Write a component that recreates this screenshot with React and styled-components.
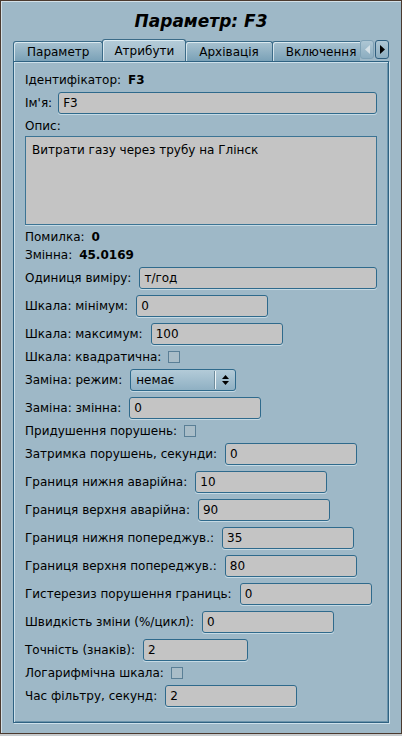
import React from 'react';
import styled, { createGlobalStyle } from 'styled-components';

const Global = createGlobalStyle`
  html, body { margin: 0; padding: 0; background: #c6cacc; }
  body { font-family: "DejaVu Sans", "Noto Sans", sans-serif; color: #000; }
  #root { width: 402px; height: 736px; }
`;

const Window = styled.div`
  box-sizing: border-box;
  width: 402px;
  height: 734px;
  background: #9eb8c7;
  border: 1px solid #4b3a2f;
  box-shadow: inset 1px 1px 0 #d3e0e7;
  display: flex;
  flex-direction: column;
  padding: 0 12px 10px 12px;
`;

const Title = styled.div`
  height: 38px;
  box-sizing: border-box;
  padding-top: 8px;
  font-size: 17px;
  line-height: 24px;
  font-weight: bold;
  font-style: italic;
  text-align: center;
`;

const TabBar = styled.div`
  display: flex;
  align-items: flex-end;
  height: 22px;
`;

const TabStrip = styled.div`
  flex: 1;
  display: flex;
  align-items: flex-end;
  overflow: hidden;
  height: 22px;
`;

const Tab = styled.div`
  flex: none;
  box-sizing: border-box;
  height: ${(p) => (p.$active ? 22 : 20)}px;
  padding: 0 ${(p) => (p.$active ? 11 : 13)}px;
  font-size: 12px;
  display: flex;
  align-items: center;
  border: 1px solid #3b6b88;
  border-bottom: none;
  border-radius: 3px 3px 0 0;
  background: ${(p) =>
    p.$active
      ? 'linear-gradient(#b4ccd9, #9eb8c7)'
      : 'linear-gradient(#a8c2d0, #7aa1b7)'};
  box-shadow: inset 1px 1px 0 rgba(235, 245, 250, 0.75);
  margin-left: ${(p) => (p.$first ? 0 : -1)}px;
`;

const ScrollButtons = styled.div`
  flex: none;
  display: flex;
  gap: 1px;
  padding-bottom: 2px;
`;

const ScrollBtn = styled.div`
  box-sizing: border-box;
  width: 14px;
  height: 19px;
  border: 1px solid ${(p) => (p.$disabled ? '#7ea1b5' : '#2f5f7f')};
  border-radius: 3px;
  background: linear-gradient(#aec7d4, #8cadc0);
  display: flex;
  align-items: center;
  justify-content: center;
`;

const Panel = styled.div`
  flex: 1;
  box-sizing: border-box;
  border: 1px solid #2f6282;
  box-shadow: inset 1px 1px 0 #cde0ea, inset -1px -1px 0 #6a93ab, 1px 1px 0 #cde0ea;
  padding: 9px 11px 0 11px;
  display: flex;
  flex-direction: column;
  font-size: 12px;
`;

const InfoRow = styled.div`
  height: 18px;
  display: flex;
  align-items: center;
  gap: 7px;
  white-space: nowrap;
`;

const Value = styled.span`
  font-weight: bold;
`;

const FieldRow = styled.div`
  height: 28px;
  display: flex;
  align-items: center;
  gap: ${(p) => (p.$gap ? p.$gap : 8)}px;
  white-space: nowrap;
`;

const CheckRow = styled.div`
  height: 18px;
  display: flex;
  align-items: center;
  gap: 7px;
  white-space: nowrap;
`;

const Label = styled.span`
  flex: none;
`;

const Field = styled.input`
  box-sizing: border-box;
  height: 22px;
  width: ${(p) => (p.$w ? `${p.$w}px` : 'auto')};
  flex: ${(p) => (p.$w ? 'none' : '1')};
  min-width: 0;
  margin: 0;
  background: #c4c4c4;
  border: 1px solid #2f6a8c;
  border-radius: 3px;
  box-shadow: 0 1px 0 #c6dae4;
  padding: 0 4px;
  font-family: "DejaVu Sans", sans-serif;
  font-size: 12px;
  color: #000;
  outline: none;
`;

const Memo = styled.textarea`
  box-sizing: border-box;
  width: 100%;
  height: 89px;
  margin: 1px 0 3px 0;
  resize: none;
  background: #c4c4c4;
  border: 1px solid #3c7494;
  border-radius: 0;
  box-shadow: 0 1px 0 #c6dae4;
  padding: 5px 6px;
  font-family: "DejaVu Sans", sans-serif;
  font-size: 12px;
  line-height: 16px;
  color: #000;
  outline: none;
`;

const Select = styled.div`
  box-sizing: border-box;
  width: 106px;
  height: 22px;
  border: 1px solid #2f6a8c;
  border-radius: 3px;
  background: linear-gradient(#b3cbd8, #8fb0c3);
  box-shadow: 0 1px 0 #c6dae4;
  display: flex;
  align-items: center;
`;

const SelectText = styled.span`
  flex: 1;
  padding-left: 5px;
`;

const SelectArrow = styled.span`
  width: 19px;
  height: 18px;
  border-left: 1px solid #eef5f8;
  box-shadow: -1px 0 0 #6f8c9c;
  display: flex;
  align-items: center;
  justify-content: center;
`;

const Check = styled.span`
  box-sizing: border-box;
  flex: none;
  width: 12px;
  height: 12px;
  border: 1px solid #5a7f96;
  background: #a9bdc8;
`;

const fields = [
  { type: 'field', label: 'Затримка порушень, секунди:', value: '0', w: 132 },
  { type: 'field', label: 'Границя нижня аварійна:', value: '10', w: 132 },
  { type: 'field', label: 'Границя верхня аварійна:', value: '90', w: 132 },
  { type: 'field', label: 'Границя нижня попереджув.:', value: '35', w: 132 },
  { type: 'field', label: 'Границя верхня попереджув.:', value: '80', w: 132 },
  { type: 'field', label: 'Гистерезиз порушення границь:', value: '0', w: 132 },
  { type: 'field', label: 'Швидкість зміни (%/цикл):', value: '0', w: 132 },
  { type: 'field', label: 'Точність (знаків):', value: '2', w: 105 },
  { type: 'check', label: 'Логарифмічна шкала:' },
  { type: 'field', label: 'Час фільтру, секунд:', value: '2', w: 132 },
];

export default function App() {
  return (
    <>
      <Global />
      <Window>
        <Title>Параметр: F3</Title>
        <TabBar>
          <TabStrip>
            <Tab $first>Параметр</Tab>
            <Tab $active>Атрибути</Tab>
            <Tab>Архівація</Tab>
            <Tab>Включення</Tab>
          </TabStrip>
          <ScrollButtons>
            <ScrollBtn $disabled>
              <svg width="5" height="9" viewBox="0 0 5 9">
                <polygon points="5,0 0,4.5 5,9" fill="#d4e0e6" />
              </svg>
            </ScrollBtn>
            <ScrollBtn>
              <svg width="5" height="9" viewBox="0 0 5 9">
                <polygon points="0,0 5,4.5 0,9" fill="#000" />
              </svg>
            </ScrollBtn>
          </ScrollButtons>
        </TabBar>
        <Panel>
          <InfoRow>
            <Label>Ідентифікатор:</Label>
            <Value>F3</Value>
          </InfoRow>
          <FieldRow $gap={6}>
            <Label>Ім'я:</Label>
            <Field readOnly defaultValue="F3" />
          </FieldRow>
          <InfoRow>
            <Label>Опис:</Label>
          </InfoRow>
          <Memo readOnly defaultValue="Витрати газу через трубу на Глінск" />
          <InfoRow>
            <Label>Помилка:</Label>
            <Value>0</Value>
          </InfoRow>
          <InfoRow>
            <Label>Змінна:</Label>
            <Value>45.0169</Value>
          </InfoRow>
          <FieldRow>
            <Label>Одиниця виміру:</Label>
            <Field readOnly defaultValue="т/год" />
          </FieldRow>
          <FieldRow>
            <Label>Шкала: мінімум:</Label>
            <Field readOnly defaultValue="0" $w={132} />
          </FieldRow>
          <FieldRow>
            <Label>Шкала: максимум:</Label>
            <Field readOnly defaultValue="100" $w={132} />
          </FieldRow>
          <CheckRow>
            <Label>Шкала: квадратична:</Label>
            <Check />
          </CheckRow>
          <FieldRow>
            <Label>Заміна: режим:</Label>
            <Select>
              <SelectText>немає</SelectText>
              <SelectArrow>
                <svg width="7" height="12" viewBox="0 0 7 12">
                  <polygon points="0,5 3.5,1 7,5" fill="#000" />
                  <polygon points="0,7 7,7 3.5,11" fill="#000" />
                </svg>
              </SelectArrow>
            </Select>
          </FieldRow>
          <FieldRow>
            <Label>Заміна: змінна:</Label>
            <Field readOnly defaultValue="0" $w={132} />
          </FieldRow>
          <CheckRow>
            <Label>Придушення порушень:</Label>
            <Check />
          </CheckRow>
          {fields.map((f) =>
            f.type === 'check' ? (
              <CheckRow key={f.label}>
                <Label>{f.label}</Label>
                <Check />
              </CheckRow>
            ) : (
              <FieldRow key={f.label}>
                <Label>{f.label}</Label>
                <Field readOnly defaultValue={f.value} $w={f.w} />
              </FieldRow>
            )
          )}
        </Panel>
      </Window>
    </>
  );
}
